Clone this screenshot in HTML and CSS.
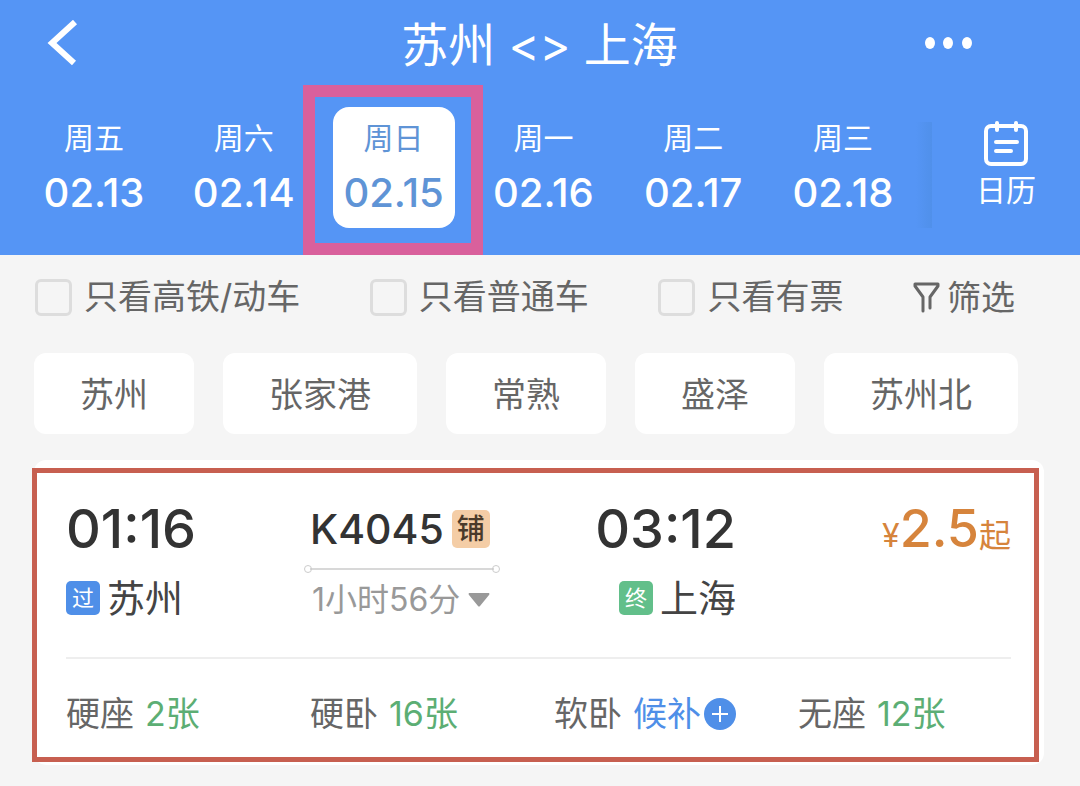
FILE: index.html
```html
<!DOCTYPE html>
<html lang="zh-CN">
<head>
    <meta charset="UTF-8">
    <meta name="viewport" content="width=device-width, initial-scale=1.0">
    <title>苏州 - 上海</title>
    <link rel="stylesheet" href="styles.css">
</head>
<body>
    <header class="header">
        <div class="title-bar">
            <button class="icon-btn" type="button" aria-label="返回">
                <svg width="32" height="46" viewBox="0 0 32 46" fill="none" stroke="currentColor" stroke-width="6">
                    <path d="M29 2 L6 23 L28 43"/>
                </svg>
            </button>
            <h1 class="title">苏州 &lt;&gt; 上海</h1>
            <button class="icon-btn" type="button" aria-label="更多">
                <svg width="48" height="12" viewBox="0 0 48 12" fill="currentColor">
                    <ellipse cx="5" cy="6" rx="5" ry="6"/>
                    <ellipse cx="23" cy="6" rx="5" ry="6"/>
                    <ellipse cx="42" cy="6" rx="5" ry="6"/>
                </svg>
            </button>
        </div>

        <nav class="date-bar">
            <div class="days">
                <button class="day" type="button"><span class="week">周五</span><span class="date">02.13</span></button>
                <button class="day" type="button"><span class="week">周六</span><span class="date">02.14</span></button>
                <button class="day active" type="button" aria-pressed="true"><span class="week">周日</span><span class="date">02.15</span></button>
                <button class="day" type="button"><span class="week">周一</span><span class="date">02.16</span></button>
                <button class="day" type="button"><span class="week">周二</span><span class="date">02.17</span></button>
                <button class="day" type="button"><span class="week">周三</span><span class="date">02.18</span></button>
            </div>
            <button class="calendar" type="button">
                <svg width="44" height="46" viewBox="0 0 44 46" fill="none" stroke="currentColor" stroke-width="4" stroke-linecap="round">
                    <rect x="2" y="6" width="40" height="38" rx="5"/>
                    <path d="M13 3v7M32 3v7"/>
                    <path d="M12 22h21M12 31h15"/>
                </svg>
                <span>日历</span>
            </button>
        </nav>
    </header>

    <main>
        <form class="filters">
            <label class="check"><input type="checkbox">只看高铁/动车</label>
            <label class="check"><input type="checkbox">只看普通车</label>
            <label class="check"><input type="checkbox">只看有票</label>
            <button class="filter-btn" type="button">
                <svg width="27" height="32" viewBox="0 0 27 32" fill="none" stroke="currentColor" stroke-width="3" stroke-linejoin="round" stroke-linecap="round">
                    <path d="M10 29V15L2 4V2H25V4L17 15V26"/>
                </svg>
                筛选
            </button>
        </form>

        <div class="stations">
            <button class="chip" type="button">苏州</button>
            <button class="chip" type="button">张家港</button>
            <button class="chip" type="button">常熟</button>
            <button class="chip" type="button">盛泽</button>
            <button class="chip" type="button">苏州北</button>
        </div>

        <article class="ticket">
            <div class="route">
                <div class="stop">
                    <div class="time">01:16</div>
                    <div class="station"><span class="tag tag-pass">过</span>苏州</div>
                </div>
                <div class="train">
                    <div class="train-no">K4045<span class="tag tag-berth">铺</span></div>
                    <div class="track"></div>
                    <button class="duration" type="button">
                        1小时56分
                        <svg width="22" height="14" viewBox="0 0 22 14" fill="currentColor">
                            <path d="M1 0h20q1 1 0 2L12 13q-1 1-2 0L1 2q-1-1 0-2z"/>
                        </svg>
                    </button>
                </div>
                <div class="stop arrive">
                    <div class="time">03:12</div>
                    <div class="station"><span class="tag tag-end">终</span>上海</div>
                </div>
                <div class="price"><span class="unit">¥</span>2.5<span class="unit">起</span></div>
            </div>
            <ul class="seats">
                <li>硬座 <span class="left">2张</span></li>
                <li>硬卧 <span class="left">16张</span></li>
                <li>软卧 <a class="waitlist" href="#">候补<svg width="32" height="32" viewBox="0 0 32 32">
                    <circle cx="16" cy="16" r="16" fill="currentColor"/>
                    <path d="M16 8v16M8 16h16" stroke="#fff" stroke-width="2"/>
                </svg></a></li>
                <li>无座 <span class="left">12张</span></li>
            </ul>
        </article>
    </main>
</body>
</html>
```
FILE: styles.css
```css
* {
    box-sizing: border-box;
}
body {
    margin: 0;
    background-color: #f5f5f5;
    color: #666;
    font-family: Inter, 'Noto Sans CJK SC', sans-serif;
    font-size: 34px;
}
button {
    padding: 0;
    border: none;
    background: none;
    color: inherit;
    font: inherit;
    cursor: pointer;
}
svg {
    display: block;
    flex: none;
}

/* header */
.header {
    background-color: #5595f5;
    color: #fff;
}
.title-bar {
    display: flex;
    justify-content: space-between;
    align-items: center;
    height: 90px;
    padding: 0 107px 4px 46px;
}
.icon-btn {
    width: 48px;
}
.title {
    margin: 0;
    padding: 0 0 4px 60px;
    font-size: 47px;
    font-weight: 400;
}
.date-bar {
    display: flex;
    padding: 17px 0 27px 19px;
}
.days {
    flex: 1;
    display: flex;
    justify-content: space-between;
    padding: 0 28px 0 14px;
    background: linear-gradient(to left, #5090ea, #5595f5) no-repeat right bottom / 16px 106px;
}
.day {
    position: relative;
    width: 122px;
    padding: 8px 0 5px;
    border-radius: 16px;
}
.week,
.date {
    display: block;
}
.week {
    font-size: 30px;
    line-height: 46px;
}
.date {
    padding-top: 2px;
    font-size: 40px;
    font-weight: 500;
    line-height: 60px;
}
.day.active {
    background-color: #fff;
    color: #5f94d6;
}
.day.active::after {
    content: "";
    position: absolute;
    inset: -22px -28px -27px -30px;
    border: 12px solid #d9609c;
}
.calendar {
    display: flex;
    flex-direction: column;
    align-items: center;
    width: 148px;
    padding-top: 13px;
    font-size: 30px;
    line-height: 48px;
}

/* filters */
.filters {
    display: flex;
    justify-content: space-between;
    padding: 24px 65px 0 35px;
    line-height: 36px;
}
.check {
    display: flex;
    gap: 12px;
}
.check input {
    appearance: none;
    width: 37px;
    height: 37px;
    margin: 0;
    border: 3px solid #ddd;
    border-radius: 6px;
}
.check input:checked {
    background-color: #5595f5;
}
.filter-btn {
    display: flex;
    align-items: center;
    gap: 7px;
}
.stations {
    display: flex;
    gap: 29px;
    padding: 37px 34px 26px;
}
.chip {
    height: 81px;
    padding: 0 46px 2px;
    border-radius: 12px;
    background-color: #fff;
}

/* ticket */
.ticket {
    position: relative;
    margin: 0 36px 0 34px;
    padding: 37px 2px 27px 32px;
    border-radius: 12px;
    background-color: #fff;
}
.ticket::after {
    content: "";
    position: absolute;
    inset: 8px 5px 3px -2px;
    border: 5px solid #c75f50;
    pointer-events: none;
}
.route {
    display: grid;
    grid-template-columns: 238fr 196fr 236fr 275fr;
    margin-right: 31px;
    padding-bottom: 33px;
    border-bottom: 2px solid #eee;
}
.time {
    color: #333;
    font-size: 54px;
    font-weight: 500;
    line-height: 64px;
}
.station {
    display: flex;
    align-items: center;
    gap: 7px;
    margin-top: 13px;
    color: #444;
    font-size: 38px;
    line-height: 48px;
}
.arrive {
    display: flex;
    flex-direction: column;
    align-items: flex-end;
}
.tag {
    width: 34px;
    height: 34px;
    border-radius: 5px;
    color: #fff;
    font-size: 22px;
    line-height: 34px;
    text-align: center;
}
.tag-pass {
    background-color: #4f8fe8;
}
.tag-end {
    background-color: #62bf8a;
}
.tag-berth {
    width: 38px;
    height: 38px;
    background-color: #f4cda6;
    color: #4a3a2a;
    font-size: 28px;
    line-height: 38px;
}
.train-no {
    display: flex;
    align-items: center;
    gap: 8px;
    padding-left: 6px;
    color: #333;
    font-size: 41px;
    font-weight: 500;
    line-height: 64px;
}
.track {
    display: flex;
    align-items: center;
    justify-content: space-between;
    height: 7px;
    margin: 4px 0;
    background: linear-gradient(#d8d8d8, #d8d8d8) no-repeat center / calc(100% - 12px) 2px;
}
.track::before,
.track::after {
    content: "";
    width: 6px;
    height: 6px;
    border: 1px solid #ccc;
    border-radius: 50%;
}
.duration {
    display: flex;
    align-items: center;
    gap: 8px;
    padding-left: 8px;
    color: #999;
    font-size: 32px;
    line-height: 48px;
    white-space: nowrap;
}
.price {
    color: #d6843c;
    font-size: 52px;
    font-weight: 500;
    line-height: 64px;
    text-align: right;
}
.unit {
    font-size: 32px;
    font-weight: 400;
}
.seats {
    display: grid;
    grid-template-columns: repeat(4, 1fr);
    margin: 0;
    padding: 31px 0 0;
    line-height: 48px;
    list-style: none;
}
.seats li {
    display: flex;
    gap: 11px;
    white-space: nowrap;
}
.left {
    color: #5cae74;
}
.waitlist {
    display: flex;
    align-items: center;
    gap: 3px;
    color: #4f8fe8;
    text-decoration: none;
}
```
